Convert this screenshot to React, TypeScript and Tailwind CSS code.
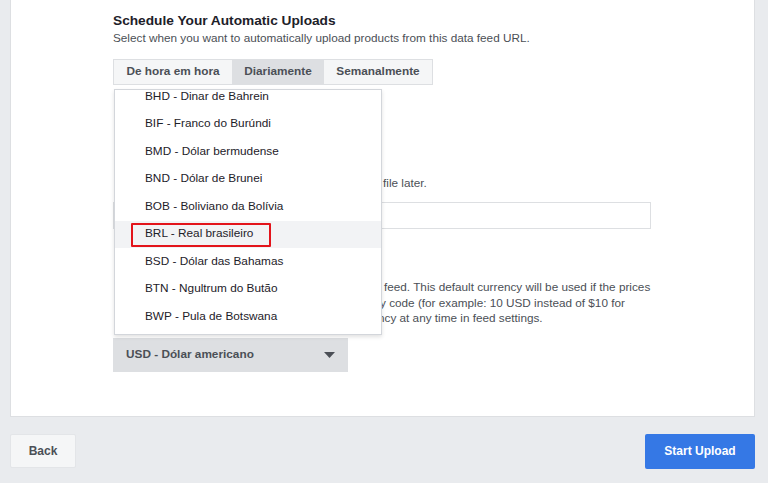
const currencies = [
  'BHD - Dinar de Bahrein',
  'BIF - Franco do Burúndi',
  'BMD - Dólar bermudense',
  'BND - Dólar de Brunei',
  'BOB - Boliviano da Bolívia',
  'BRL - Real brasileiro',
  'BSD - Dólar das Bahamas',
  'BTN - Ngultrum do Butão',
  'BWP - Pula de Botswana',
];

const tabs = [
  { label: 'De hora em hora', w: 'w-[118px]' },
  { label: 'Diariamente', w: 'w-[92px]' },
  { label: 'Semanalmente', w: 'w-[108px]' },
];

function CurrencyMenu() {
  return (
    <div className="absolute left-[103px] top-[89px] w-[268px] h-[246px] overflow-hidden bg-white border border-[#d3d6db] shadow-[0_2px_4px_rgba(0,0,0,0.12)] z-10">
      <div className="-mt-[7px]">
        {currencies.map(c => {
          const active = c.startsWith('BRL');
          return (
            <div
              key={c}
              className={`relative h-[27.5px] flex items-center pl-[30px] text-[11.8px] text-[#1d2129] ${active ? 'bg-[#f2f3f5]' : ''}`}
            >
              {c}
              {active && (
                <span className="absolute left-[16px] top-[2.5px] w-[140px] h-[24px] border-2 border-[#e3141b] rounded-[1px]" />
              )}
            </div>
          );
        })}
      </div>
    </div>
  );
}

export default function App() {
  return (
    <div className="w-[768px] h-[483px] bg-[#e9ebee] pl-[10px] pr-[13px] overflow-hidden font-['Liberation_Sans',Arial,sans-serif]">
      <div className="relative bg-white border-x border-b border-[#dddfe2] pl-[102px] pt-[13px] pb-[44px]">
        <h2 className="text-[13.7px] leading-[16px] font-bold text-[#1d2129]">Schedule Your Automatic Uploads</h2>
        <p className="mt-[1px] text-[11.75px] leading-[16px] text-[#4b4f56]">
          Select when you want to automatically upload products from this data feed URL.
        </p>

        <div className="mt-[13px] flex w-fit h-[26px] border border-[#dddfe2] bg-[#f5f6f7]">
          {tabs.map((t, i) => (
            <div
              key={t.label}
              className={`${t.w} flex items-center justify-center text-[11.8px] font-bold text-[#4b4f56] ${i === 1 ? 'bg-[#dddfe2]' : ''}`}
            >
              {t.label}
            </div>
          ))}
        </div>

        <div className="h-[90px]" />
        <div className="flex text-[11.75px] leading-[16px] text-[#4b4f56]">
          <div className="w-[270px] shrink-0" />
          <span>file later.</span>
        </div>
        <div className="mt-[11px] w-[538px] h-[27px] border border-[#dddfe2] bg-white" />

        <div className="mt-[50px] text-[11.75px] leading-[15.5px] text-[#4b4f56] whitespace-nowrap">
          <div className="flex">
            <div className="w-[271px] shrink-0" />
            <span>feed. This default currency will be used if the prices</span>
          </div>
          <div className="flex">
            <div className="w-[267px] shrink-0" />
            <span>y code (for example: 10 USD instead of $10 for</span>
          </div>
          <div className="flex">
            <div className="w-[265px] shrink-0" />
            <span>ncy at any time in feed settings.</span>
          </div>
        </div>

        <div className="mt-[12px] w-[235px] h-[34px] bg-[#dddfe2] flex items-center justify-between pl-[13px] pr-[13px]">
          <span className="text-[11.8px] font-bold text-[#4b4f56]">USD - Dólar americano</span>
          <svg width="11" height="6" viewBox="0 0 11 6">
            <path d="M0 0h11L5.5 6z" fill="#4b4f56" />
          </svg>
        </div>

        <CurrencyMenu />
      </div>

      <div className="mt-[17px] flex justify-between">
        <button className="w-[66px] h-[34px] bg-[#f5f6f7] border border-[#e3e5e8] rounded-[2px] text-[12px] font-bold text-[#4b4f56]">
          Back
        </button>
        <button className="w-[110px] h-[35px] bg-[#3578e5] rounded-[2px] text-[12px] font-bold text-white">
          Start Upload
        </button>
      </div>
    </div>
  );
}
